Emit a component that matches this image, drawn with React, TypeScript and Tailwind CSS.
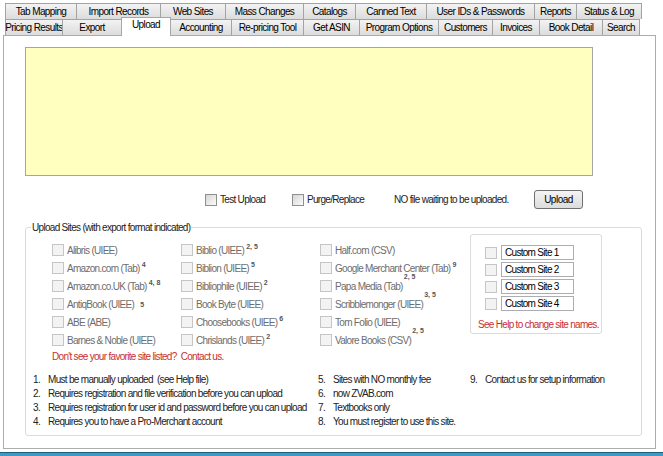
import React from "react";

const font = "font-['Liberation_Sans',Arial,sans-serif]";
const txt = "text-[10px] tracking-[-0.7px]";

const topTabs: [string, number][] = [
  ["Tab Mapping", 72],
  ["Import Records", 85],
  ["Web Sites", 66],
  ["Mass Changes", 79],
  ["Catalogs", 53],
  ["Canned Text", 72],
  ["User IDs & Passwords", 109],
  ["Reports", 43],
  ["Status & Log", 66],
];

const lowTabs: [string, number][] = [
  ["Pricing Results", 58],
  ["Export", 60],
  ["Upload", 50],
  ["Accounting", 62],
  ["Re-pricing Tool", 73],
  ["Get ASIN", 57],
  ["Program Options", 80],
  ["Customers", 55],
  ["Invoices", 48],
  ["Book Detail", 64],
  ["Search", 38],
];

const Box = ({ dis }: { dis?: boolean }) => (
  <span
    className={
      dis
        ? "inline-block w-[12px] h-[12px] shrink-0 border border-[#c6c6c6] bg-[#f3f3f3]"
        : "inline-block w-[12px] h-[12px] shrink-0 border border-[#8e8f8f] bg-linear-to-br from-[#d6d6d6] to-[#fbfbfb]"
    }
  />
);

const Tab = ({ label, w, sel }: { label: string; w: number; sel?: boolean }) => (
  <div
    style={{ width: w }}
    className={
      sel
        ? "relative z-10 h-[19px] -mt-[2px] -mb-[1px] -ml-[1px] flex items-start justify-center pt-[2px] bg-white border border-b-0 border-[#a7a7a7]"
        : "h-[16px] flex items-center justify-center bg-linear-to-b from-[#f3f3f3] to-[#dcdcdc] border border-b-0 border-[#a3a3a3] -ml-[1px] first:ml-0"
    }
  >
    <span className="text-[10px] tracking-[-0.6px] leading-none text-black whitespace-nowrap">{label}</span>
  </div>
);

const Sup = ({ t, high }: { t: string; high?: boolean }) => (
  <span
    className={
      high
        ? "relative -top-[10px] ml-[1px] text-[7px] tracking-normal font-bold leading-none text-[#555]"
        : "relative -top-[4px] ml-[2px] text-[7px] tracking-normal font-bold leading-none text-[#555]"
    }
  >
    {t}
  </span>
);

type Site = { n: string; s?: string; high?: boolean; low?: boolean };

const col1: Site[] = [
  { n: "Alibris (UIEE)" },
  { n: "Amazon.com (Tab)", s: "4" },
  { n: "Amazon.co.UK (Tab)", s: "4, 8" },
  { n: "AntiqBook (UIEE)", s: "5", low: true },
  { n: "ABE (ABE)" },
  { n: "Barnes & Noble (UIEE)" },
];
const col2: Site[] = [
  { n: "Biblio (UIEE)", s: "2, 5" },
  { n: "Biblion (UIEE)", s: "5" },
  { n: "Bibliophile (UIEE)", s: "2" },
  { n: "Book Byte (UIEE)" },
  { n: "Choosebooks (UIEE)", s: "6" },
  { n: "Chrislands (UIEE)", s: "2" },
];
const col3: Site[] = [
  { n: "Half.com (CSV)" },
  { n: "Google Merchant Center (Tab)", s: "9" },
  { n: "Papa Media (Tab)", s: "2, 5", high: true },
  { n: "Scribblemonger (UIEE)", s: "3, 5", high: true },
  { n: "Tom Folio (UIEE)" },
  { n: "Valore Books (CSV)", s: "2, 5", high: true },
];

const SiteCol = ({ items, w }: { items: Site[]; w: number }) => (
  <div style={{ width: w }} className="flex flex-col shrink-0">
    {items.map((it) => (
      <div key={it.n} className="h-[18px] flex items-center whitespace-nowrap">
        <Box dis />
        <span className={`ml-[3px] ${txt} text-[#6d6d6d]`}>{it.n}</span>
        {it.s &&
          (it.low ? (
            <span className="ml-[6px] relative top-[1px] text-[7px] font-bold text-[#555]">{it.s}</span>
          ) : (
            <Sup t={it.s} high={it.high} />
          ))}
      </div>
    ))}
  </div>
);

const notes1 = [
  "Must be manually uploaded  (see Help file)",
  "Requires registration and file verification before you can upload",
  "Requires registration for user id and password before you can upload",
  "Requires you to have a Pro-Merchant account",
];
const notes2 = ["Sites with NO monthly fee", "now ZVAB.com", "Textbooks only", "You must register to use this site."];

const NoteCol = ({ items, start, w }: { items: string[]; start: number; w?: number }) => (
  <div style={w ? { width: w } : undefined} className="flex flex-col shrink-0">
    {items.map((t, i) => (
      <div key={t} className={`h-[14px] flex items-center ${txt} text-[#222] whitespace-pre`}>
        <span className="w-[15px] shrink-0">{start + i}.</span>
        <span>{t}</span>
      </div>
    ))}
  </div>
);

export default function App() {
  return (
    <div className={`w-[663px] h-[456px] bg-white flex flex-col overflow-hidden ${font}`}>
      <div className="flex flex-col pl-[5px] pt-[3px]">
        <div className="flex">
          {topTabs.map(([l, w]) => (
            <Tab key={l} label={l} w={w} />
          ))}
        </div>
        <div className="flex items-start">
          {lowTabs.map(([l, w]) => (
            <Tab key={l} label={l} w={w} sel={l === "Upload"} />
          ))}
        </div>
      </div>

      <div className="ml-[3px] w-[653px] h-[414px] border border-[#acacac] bg-white flex flex-col">
        <div className="ml-[21px] mt-[11px] w-[568px] h-[129px] bg-[#ffffc0] border border-[#a5a5a5]" />

        <div className={`mt-[14px] ml-[201px] h-[19px] flex items-center ${txt} text-[#222] whitespace-nowrap`}>
          <div className="w-[87px] flex items-center gap-[3px]">
            <Box />
            <span>Test Upload</span>
          </div>
          <div className="w-[102px] flex items-center gap-[3px]">
            <Box />
            <span>Purge/Replace</span>
          </div>
          <div className="w-[140px]">NO file waiting to be uploaded.</div>
          <button className="w-[49px] h-[19px] rounded-[3px] border border-[#707070] bg-linear-to-b from-[#f4f4f4] to-[#dcdcdc] text-[10px] tracking-[-0.5px] text-black">
            Upload
          </button>
        </div>

        <fieldset className="mt-[12px] ml-[21px] w-[617px] h-[215px] border border-[#d3dde3] rounded-[3px] pl-[26px]">
          <legend className={`ml-[-21px] px-[1px] ${txt} text-[#222] leading-[13px]`}>
            Upload Sites (with export format indicated)
          </legend>
          <div className="flex">
            <div className="flex pt-[7px]">
              <SiteCol items={col1} w={129} />
              <SiteCol items={col2} w={139} />
              <SiteCol items={col3} w={150} />
            </div>
            <div className="w-[132px] h-[100px] border border-[#dcdcdc] rounded-[3px] pt-[9px] pl-[14px] flex flex-col">
              {[1, 2, 3, 4].map((n) => (
                <div key={n} className="h-[17px] flex items-center gap-[4px]">
                  <Box dis />
                  <div className={`w-[73px] h-[15px] border border-[#abadb3] bg-white ${txt} text-black leading-[13px] pl-[3px] whitespace-nowrap overflow-hidden`}>
                    Custom Site {n}
                  </div>
                </div>
              ))}
              <div className={`mt-[5px] -ml-[7px] ${txt} text-[#c8302f] whitespace-nowrap`}>See Help to change site names.</div>
            </div>
          </div>
          <div className={`mt-[1px] h-[13px] ${txt} text-[#c8302f] leading-[13px] whitespace-pre`}>
            Don't see your favorite site listed?  Contact us.
          </div>
          <div className="mt-[9px] -ml-[19px] flex">
            <NoteCol items={notes1} start={1} w={285} />
            <NoteCol items={notes2} start={5} w={152} />
            <NoteCol items={["Contact us for setup information"]} start={9} />
          </div>
        </fieldset>
      </div>

      <div className="mt-[3px] h-[4px] border-t border-[#1f5f80] bg-[#3a9cc6]" />
    </div>
  );
}
